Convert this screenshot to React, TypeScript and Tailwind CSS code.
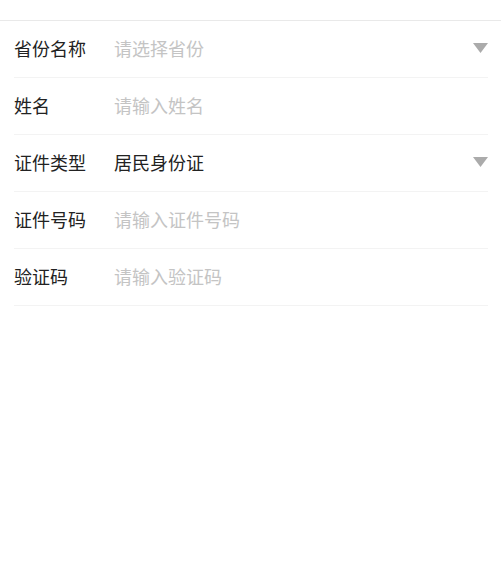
const rows = [
  { label: "省份名称", value: "请选择省份", placeholder: true, select: true },
  { label: "姓名", value: "请输入姓名", placeholder: true, select: false },
  { label: "证件类型", value: "居民身份证", placeholder: false, select: true },
  { label: "证件号码", value: "请输入证件号码", placeholder: true, select: false },
  { label: "验证码", value: "请输入验证码", placeholder: true, select: false },
];

const Caret = () => (
  <svg width="15" height="10" viewBox="0 0 15 10">
    <path d="M0 0 H15 L7.5 10 Z" fill="#ababab" />
  </svg>
);

export default function App() {
  return (
    <div
      className="min-h-[580px] bg-white"
      style={{ fontFamily: '"Noto Sans CJK SC", "Noto Sans", sans-serif' }}
    >
      <div className="h-[20px]" />
      <div className="border-t border-[#e9e9e9]">
        {rows.map((row) => (
          <div
            key={row.label}
            className="ml-[14px] mr-[13px] flex h-[57px] items-center border-b border-[#f3f3f3] pb-[2px]"
          >
            <span className="w-[100px] text-[18px] leading-none text-[#222]">{row.label}</span>
            <span
              className={`flex-1 text-[18px] leading-none ${row.placeholder ? "text-[#c4c4c4]" : "text-[#222]"}`}
            >
              {row.value}
            </span>
            {row.select && <Caret />}
          </div>
        ))}
      </div>
    </div>
  );
}
